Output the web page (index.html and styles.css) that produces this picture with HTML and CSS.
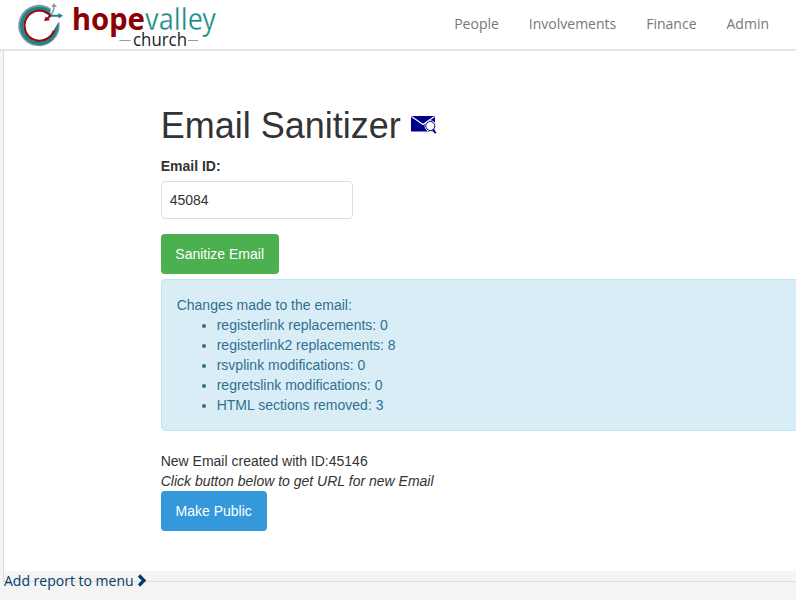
FILE: index.html
```html
<!DOCTYPE html>
<html lang="en">
<head>
<meta charset="utf-8">
<title>Email Sanitizer</title>
<link rel="stylesheet" href="styles.css">
</head>
<body>
<header class="navbar">
  <a class="brand">
    <svg width="204" height="49" viewBox="14 0 204 49">
      <g fill="none">
        <path d="M50.200 9.800A19.300 19.300 0 1 0 58 22.300" stroke="#8595a3" stroke-width="2.800"/>
        <path d="M50 12.200A17.400 17.400 0 1 0 56.500 24" stroke="#168885" stroke-width="3.400"/>
        <path d="M50 14.800A15.100 15.100 0 1 0 54.600 27" stroke="#960b13" stroke-width="2.200"/>
        <path d="M51 16 61 14 58.600 21.500 53.500 31 49 25Z" fill="#fff"/>
        <path d="M50.500 14.500Q54 12 54 6" stroke="#8c9ba7" stroke-width="1.600"/>
        <path d="M45.500 10Q49 12 51 15.700H60" stroke="#168885" stroke-width="2"/>
        <path d="M44 11.500Q48 12.500 50.300 15.800L46.500 19.500" stroke="#960b13" stroke-width="2"/>
      </g>
      <path d="M51.300 7 54 3 57 7Z" fill="#8c9ba7"/>
      <path d="M58.500 13 63 15.700 58.500 18.500Z" fill="#168885"/>
      <path d="M44 21 50 20.200 45.800 16.500Z" fill="#960b13"/>
      <text class="logo-hope" x="72" y="30" textLength="73" lengthAdjust="spacingAndGlyphs">hope</text>
      <text class="logo-valley" x="145" y="30" textLength="71" lengthAdjust="spacingAndGlyphs">valley</text>
      <path d="M119.500 40.500H130.500M188 40.500H198" stroke="#999" stroke-width="1.200"/>
      <text class="logo-church" x="133" y="45.500" textLength="54" lengthAdjust="spacingAndGlyphs">church</text>
    </svg>
  </a>
  <nav class="menu">
    <a>People</a>
    <a>Involvements</a>
    <a>Finance</a>
    <a>Admin</a>
  </nav>
</header>
<main class="page">
  <div class="content">
    <h1>Email Sanitizer
      <svg class="mail-icon" width="27" height="20" viewBox="0 0 27 20">
        <path d="M0 1H24V16.500H0Z" fill="#00008b"/>
        <path d="M.5 1.500 12 9.500 23.500 1.500" fill="none" stroke="#fff" stroke-width="1.200"/>
        <circle cx="19.300" cy="11" r="5.800" fill="#fff"/>
        <circle cx="19.300" cy="11" r="4.500" fill="#fff" stroke="#00008b" stroke-width="1"/>
        <path d="M22 14.500 24.700 18.300" stroke="#00008b" stroke-width="1.900"/>
      </svg>
    </h1>
    <label for="email-id">Email ID:</label>
    <input id="email-id" type="text" value="45084">
    <button class="btn btn-success">Sanitize Email</button>
    <div class="alert">
      Changes made to the email:
      <ul>
        <li>registerlink replacements: 0</li>
        <li>registerlink2 replacements: 8</li>
        <li>rsvplink modifications: 0</li>
        <li>regretslink modifications: 0</li>
        <li>HTML sections removed: 3</li>
      </ul>
    </div>
    <div>New Email created with ID:45146</div>
    <div><i>Click button below to get URL for new Email</i></div>
    <button class="btn btn-primary">Make Public</button>
  </div>
</main>
<a class="report-link">Add report to menu
  <svg width="10" height="13" viewBox="0 0 10 13"><path d="M2 1.500 7 6.500 2 11.500" fill="none" stroke="#003d6b" stroke-width="3.200"/></svg>
</a>
</body>
</html>
```
FILE: styles.css
```css
* { box-sizing: border-box; }
html { overflow: hidden; }
body {
  margin: 0;
  background: #f4f4f4;
  color: #333;
  font: 14px/20px "Liberation Sans", Arial, sans-serif;
}
.navbar {
  display: flex;
  justify-content: space-between;
  height: 51px;
  padding: 0 27px 0 14px;
  background: #fff;
  border-bottom: 2px solid #e5e5e5;
}
.brand svg { display: block; overflow: visible; }
.logo-hope { font: bold 31px "Noto Sans", sans-serif; fill: #8b0000; }
.logo-valley { font: 400 31px "Noto Sans", sans-serif; fill: #168885; stroke: #fff; stroke-width: .4px; }
.logo-church { font: 17.5px "Open Sans", sans-serif; fill: #222; }
.menu {
  display: flex;
  gap: 30px;
  padding-top: 14px;
  font-family: "Open Sans", sans-serif;
  color: #777;
}
.page {
  margin-left: 3px;
  height: 531px;
  padding-bottom: 10px;
  border-left: 1px solid #ddd;
  border-bottom: 1px solid #ddd;
}
.content {
  height: 520px;
  padding: 55px 0 0 156.7px;
  background: #fff;
}
h1 {
  margin: 0 0 10px;
  font-size: 36px;
  font-weight: 400;
  line-height: 40px;
}
.mail-icon { vertical-align: 3px; }
label { display: block; margin-bottom: 5px; font-weight: 700; }
input {
  display: block;
  width: 192px;
  height: 38px;
  margin-bottom: 15px;
  padding: 8px;
  border: 1px solid #ddd;
  border-radius: 4px;
  color: #333;
  font: inherit;
}
.btn {
  display: block;
  height: 40px;
  padding: 0 14px;
  border: 0;
  border-radius: 4px;
  color: #fff;
  font: inherit;
}
.btn-success { width: 118px; background: #4caf50; }
.btn-primary { width: 106px; background: #3498db; }
.alert {
  height: 152px;
  margin: 5px -10px 20px 0;
  padding: 15px;
  border: 1px solid #bce8f1;
  border-radius: 4px;
  background: #d9edf7;
  color: #31708f;
}
.alert ul { margin: 0; padding-left: 40px; }
.report-link {
  display: block;
  position: relative;
  width: max-content;
  margin: -11px 0 0 4px;
  color: #003d6b;
  font-family: "Open Sans", sans-serif;
}
.report-link svg { vertical-align: -1px; }
```
